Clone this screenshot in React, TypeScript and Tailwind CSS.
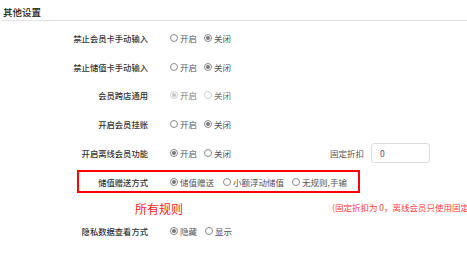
import React from "react";

type Opt = { label: string; checked?: boolean };

function Radio({ label, checked, disabled, first }: Opt & { disabled?: boolean; first?: boolean }) {
  return (
    <span className={`flex items-center ${first ? "" : "ml-[7px]"}`}>
      <span
        className={`w-[8px] h-[8px] rounded-full border flex items-center justify-center ${
          disabled ? "border-[#d0d0d0]" : "border-[#8a8a8a]"
        }`}
      >
        {checked && (
          <span className={`w-[4px] h-[4px] rounded-full ${disabled ? "bg-[#c4c4c4]" : "bg-[#777]"}`} />
        )}
      </span>
      <span className={`ml-[2px] ${disabled ? "text-[#777]" : "text-[#555]"}`}>{label}</span>
    </span>
  );
}

function Row({
  label,
  opts,
  disabled,
  extra,
}: {
  label: string;
  opts: Opt[];
  disabled?: boolean;
  extra?: React.ReactNode;
}) {
  return (
    <div className="flex items-center h-[28.75px]">
      <div className="w-[148px] text-right text-[#333] font-medium text-[8.3px]">{label}</div>
      <div className="ml-[22px] flex items-center w-[160px]">
        {opts.map((o, i) => (
          <Radio key={o.label} {...o} disabled={disabled} first={i === 0} />
        ))}
      </div>
      {extra}
    </div>
  );
}

export default function App() {
  return (
    <div
      className="w-[467px] h-[254px] bg-white overflow-hidden whitespace-nowrap text-[8.5px] leading-[12px]"
      style={{ fontFamily: '"Noto Sans CJK SC", "Noto Sans", sans-serif' }}
    >
      <div className="h-[21px] ml-[2px] pl-[1px] pt-[6px] border-b border-[#e2e2e2] text-[9.5px] text-[#222] font-medium">
        其他设置
      </div>
      <div className="pt-[2.5px]">
        <Row label="禁止会员卡手动输入" opts={[{ label: "开启" }, { label: "关闭", checked: true }]} />
        <Row label="禁止储值卡手动输入" opts={[{ label: "开启" }, { label: "关闭", checked: true }]} />
        <Row label="会员跨店通用" disabled opts={[{ label: "开启", checked: true }, { label: "关闭" }]} />
        <Row label="开启会员挂账" opts={[{ label: "开启" }, { label: "关闭", checked: true }]} />
        <Row
          label="开启离线会员功能"
          opts={[{ label: "开启", checked: true }, { label: "关闭" }]}
          extra={
            <div className="flex items-center">
              <span className="text-[#555]">固定折扣</span>
              <div className="ml-[7px] w-[59px] h-[20px] border border-[#dcdcdc] rounded-[3px] flex items-center pl-[8px] text-[#555]">
                0
              </div>
            </div>
          }
        />
      </div>
      <div className="mt-[3px] ml-[77px] w-[283px] h-[23px] border-2 border-[#ff0000] flex items-center">
        <div className="w-[69px] text-right text-[#333] font-medium text-[8.3px]">储值赠送方式</div>
        <div className="ml-[22px] flex items-center">
          <Radio label="储值赠送" checked first />
          <span className="ml-[2px] flex">
            <Radio label="小额浮动储值" />
          </span>
          <span className="ml-[1px] flex">
            <Radio label="无规则,手输" />
          </span>
        </div>
      </div>
      <div className="mt-[4px] h-[24px] flex items-center">
        <span className="ml-[135px] text-[12px] leading-[16px] text-[#ff2020]">所有规则</span>
        <span className="ml-[149px] -mt-[4px] text-[8.5px] text-[#ff3b3b]">
          (固定折扣为 0，离线会员只使用固定折扣)
        </span>
      </div>
      <div className="flex items-center h-[20px]">
        <div className="w-[148px] text-right text-[#333] font-medium text-[8.3px]">隐私数据查看方式</div>
        <div className="ml-[22px] flex items-center">
          <Radio label="隐藏" checked first />
          <span className="ml-[1px] flex">
            <Radio label="显示" />
          </span>
        </div>
      </div>
    </div>
  );
}
